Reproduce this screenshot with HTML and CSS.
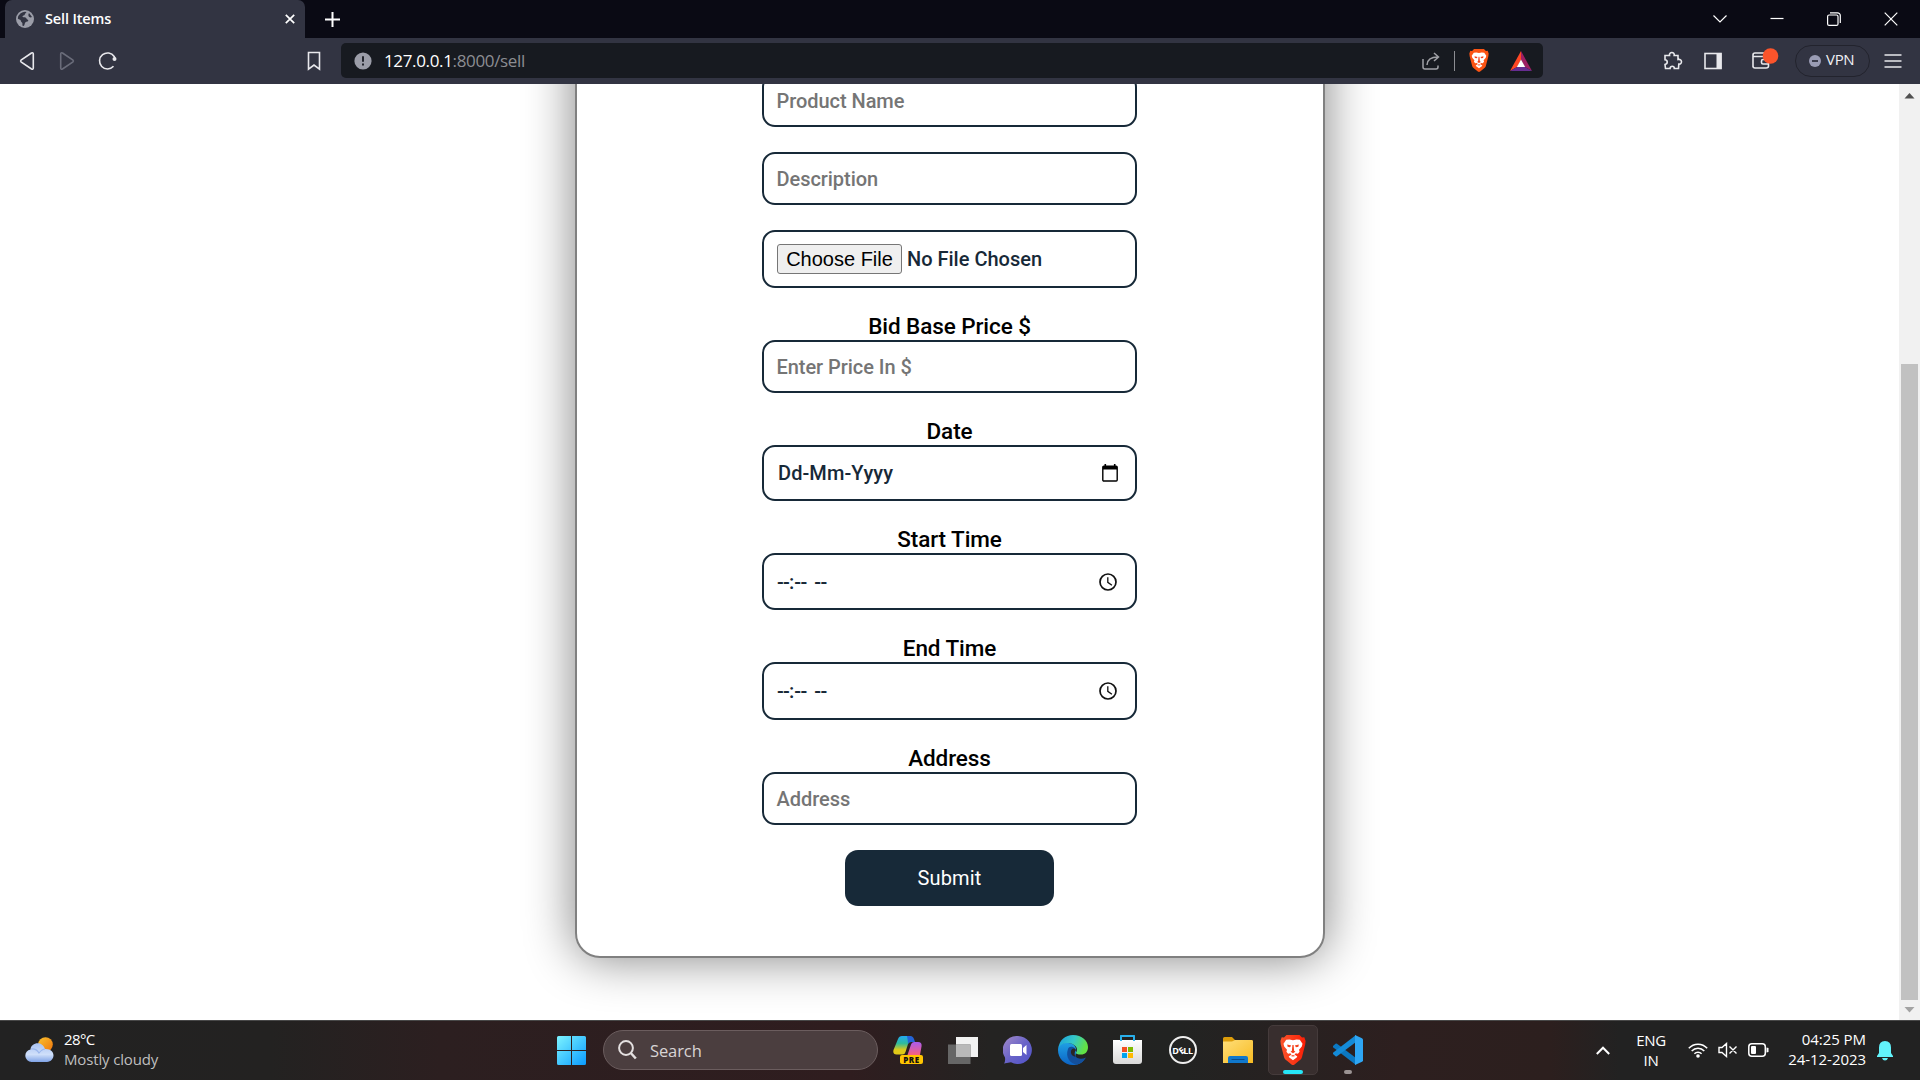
FILE: index.html
```html
<!DOCTYPE html>
<html lang="en">
<head>
<meta charset="utf-8">
<title>Sell Items</title>
<link rel="stylesheet" href="styles.css">
</head>
<body>
<svg width="0" height="0" class="defs" aria-hidden="true">
  <defs>
    <linearGradient id="gWin" x1="0" y1="0" x2="1" y2="1"><stop offset="0" stop-color="#7df4ff"/><stop offset="1" stop-color="#0a9bff"/></linearGradient>
    <linearGradient id="gSun" x1="0" y1="0" x2="1" y2="1"><stop offset="0" stop-color="#f9c22e"/><stop offset="1" stop-color="#f0740c"/></linearGradient>
    <linearGradient id="gCloud" x1="0" y1="0" x2="0" y2="1"><stop offset="0" stop-color="#a9c3f3"/><stop offset=".6" stop-color="#cfdffa"/><stop offset="1" stop-color="#7fa3e6"/></linearGradient>
    <linearGradient id="gCopA" x1="0" y1="0" x2="0" y2="1"><stop offset="0" stop-color="#22a8f2"/><stop offset=".4" stop-color="#2fbb9c"/><stop offset=".75" stop-color="#e0c918"/></linearGradient>
    <linearGradient id="gCopB" x1="0" y1="0" x2="0" y2="1"><stop offset="0" stop-color="#a95bf0"/><stop offset="1" stop-color="#f7617c"/></linearGradient>
    <linearGradient id="gChat" x1="0" y1="0" x2="1" y2="1"><stop offset="0" stop-color="#a48bc8"/><stop offset=".5" stop-color="#6a64c8"/><stop offset="1" stop-color="#4f52c9"/></linearGradient>
    <linearGradient id="gEdge" x1="0" y1="0" x2="1" y2=".3"><stop offset="0" stop-color="#1a9ee0"/><stop offset=".55" stop-color="#35c8c8"/><stop offset="1" stop-color="#62e245"/></linearGradient>
    <linearGradient id="gEdge2" x1="0" y1="0" x2="0" y2="1"><stop offset="0" stop-color="#1f9fe4"/><stop offset="1" stop-color="#0c63c4"/></linearGradient>
    <linearGradient id="gBag" x1="0" y1="0" x2="0" y2="1"><stop offset="0" stop-color="#fff"/><stop offset="1" stop-color="#d9d9d9"/></linearGradient>
    <linearGradient id="gFold" x1="0" y1="0" x2="1" y2="1"><stop offset="0" stop-color="#ffde79"/><stop offset="1" stop-color="#f7bb22"/></linearGradient>
    <linearGradient id="gBrave" x1="0" y1="0" x2="1" y2="0"><stop offset="0" stop-color="#fb542b"/><stop offset="1" stop-color="#fa1e06"/></linearGradient>
    <symbol id="lion" viewBox="0 0 26 30">
      <path d="M6.500 0h13l2.500 2.500 2.300-.2L25.600 6l-.4 3.500L22 22c-.5 1.800-1.500 2.700-3 3.800L14.500 29.400c-1 .8-2 .8-3 0L7 25.800c-1.500-1.100-2.500-2-3-3.800L.8 9.500.4 6l1.300-3.700 2.300.2z"/>
      <path fill="#fff" d="M13 5.300l3.500-.8 3.300.3 2.700 4-.7 2.600-2.800 3.300.6 2-1.700 2-2.100-.5-1.300 1.300 2.800 1.900-.6 1L13 25.200l-3.700-2.800-.6-1 2.800-1.900-1.300-1.300-2.100.5-1.700-2 .6-2-2.800-3.300-.7-2.600 2.700-4 3.300-.3z"/>
      <path fill="#f5401a" d="M7.200 9.600l4 .8-1.200 1.800-2.400-.5zM18.800 9.600l-4 .8 1.200 1.800 2.400-.5zM12.400 10h1.200l.5 5.700 1.300 1.100L13 18.200l-2.400-1.400 1.300-1.100zM10.600 21l2.400-1 2.400 1-2.400.6z"/>
    </symbol>
    <symbol id="clock" viewBox="0 0 18 18"><circle cx="9" cy="9" r="8" fill="none" stroke="#111" stroke-width="1.700"/><path d="M8.800 4.300v5l4.100 3" fill="none" stroke="#111" stroke-width="1.300"/></symbol>
  </defs>
</svg>

<header class="tabs">
  <div class="tab">
    <svg class="globe" width="18" height="18" viewBox="0 0 18 18"><circle cx="9" cy="9" r="9" fill="#9b9da8"/><path d="M1.800 8.500A7.300 7.300 0 0 1 10.500 1.900L9.300 3.500C8.500 4.500 9 5 7.500 5.600 6 6 6.300 7.300 7.500 7.300c1.500 0 2.800.2 3 1.300.3 1.400 1.800.6 1.800 2.200 0 1-1.800.6-2.800 1.400-1 .9-.6 2.400-1.700 3.900l-1.500-.5c.4-1.800.2-2.600-.6-3.300-.9-.7-.6-2-1.600-2.500-.8-.4-1.600-.5-2.300-1.300zM13 3l3 4c-1 .6-2.200.5-3-.2-.8-.8-.8-2.500 0-3.800z" fill="#323442"/></svg>
    <span class="tab-title">Sell Items</span>
    <svg width="10" height="10" viewBox="0 0 10 10" stroke="#fff" stroke-width="1.700"><path d="M.8.800l8.400 8.400M9.200.8.800 9.200"/></svg>
  </div>
  <svg class="plus" width="15" height="15" viewBox="0 0 15 15" stroke="#fff" stroke-width="2"><path d="M7.500 0v15M0 7.500h15"/></svg>
  <div class="window-controls">
    <svg width="14" height="14" viewBox="0 0 14 14"><path d="M.5 3.500 7 10l6.500-6.500"/></svg>
    <svg width="14" height="14" viewBox="0 0 14 14"><path d="M.5 6.500h13"/></svg>
    <svg width="14" height="14" viewBox="0 0 14 14"><rect x=".6" y="3" width="10.400" height="10.400" rx="1.500"/><path d="M3 .8h7.500a2.800 2.800 0 0 1 2.800 2.800V11"/></svg>
    <svg width="14" height="14" viewBox="0 0 14 14"><path d="M.7.700l12.600 12.600M13.300.7.700 13.300"/></svg>
  </div>
</header>

<nav class="toolbar">
  <svg class="ico back" width="24" height="24" viewBox="0 0 24 24"><path d="M16.500 4 6 11.200q-.8.800 0 1.600L16.500 20q1.800.7 1.800-1V5q0-1.700-1.800-1z"/></svg>
  <svg class="ico fwd" width="24" height="24" viewBox="0 0 24 24"><path d="M7.500 4 18 11.200q.8.800 0 1.600L7.500 20q-1.800.7-1.800-1V5q0-1.700 1.800-1z"/></svg>
  <svg class="ico reload" width="24" height="24" viewBox="0 0 24 24"><path d="M17.500 17.300A8 8 0 1 1 18.200 7.500l1 2.300"/><circle cx="18.500" cy="10" r="2" fill="#e8e8ec" stroke="none"/></svg>
  <svg class="ico bookmark" width="24" height="24" viewBox="0 0 24 24"><path d="M6.500 3.500h11v16.700L12 16l-5.500 4.200z"/></svg>
  <div class="address-bar">
    <svg width="18" height="18" viewBox="0 0 18 18"><circle cx="9" cy="9" r="8.600" fill="#9b9da8"/><path d="M9 4.300v5.500M9 11.500v2" stroke="#22242c" stroke-width="2"/></svg>
    <span class="url"><b>127.0.0.1</b>:8000/sell</span>
    <svg class="share" width="20" height="20" viewBox="0 0 20 20" fill="none" stroke="#a0a1a6" stroke-width="1.500"><path d="M2 8v8q0 2 2 2h11q2 0 2-2v-1.500M6 14q.3-8 11-8M13 2l4.500 4L13 10"/></svg>
    <i class="bar"></i>
    <svg width="22" height="23" class="lion-small" fill="#fb5414"><use href="#lion"/></svg>
    <svg class="bat" width="24" height="22" viewBox="0 0 24 22"><path d="M12 1 1 21l7-4 4-7z" fill="#ff4724"/><path d="M12 1l11 20-7-4-4-7z" fill="#9e1f63"/><path d="M1 21h22l-7-4H8z" fill="#662d91"/><path d="M12 9.500 16.200 17H7.800z" fill="#fff"/></svg>
  </div>
  <svg class="ico puzzle" width="24" height="24" viewBox="0 0 24 24"><path d="M4 6.500h4.500C7.800 2.500 14 2.500 13.200 6.500H17v4c4.500-.8 4.500 5 .8 4.600L17.500 19.500h-4.200c.5-3-4.500-3-4.200 0H4.500L4 15.500c3-.3 3-4.500 0-4.700z"/></svg>
  <svg class="ico panel" width="24" height="24" viewBox="0 0 24 24"><rect x="4" y="4.500" width="16" height="15"/><path d="M15.500 4h5v16h-5z" fill="#e8e8ec" stroke="none"/></svg>
  <svg class="ico wallet" width="28" height="26" viewBox="0 0 28 26"><path d="M1 20V8q0-2 2-2h12M1 9.500h15M1 19q0 2 2 2h11q2.500 0 2.500-2v-2M16.500 12.500H11q-1.500 0-1.500 1.500v1.500q0 1.500 1.500 1.500h5.500z"/><circle cx="18.500" cy="9" r="7.800" fill="#fb542b" stroke="none"/></svg>
  <div class="vpn"><svg width="12" height="12" viewBox="0 0 12 12"><circle cx="6" cy="6" r="6" fill="#9a9cb4"/><path d="M3 6h6" stroke="#323442" stroke-width="1.800"/></svg><span>VPN</span></div>
  <svg class="ico menu" width="24" height="24" viewBox="0 0 24 24"><path d="M3.500 6h17M3.500 12h17M3.500 18h17"/></svg>
</nav>

<div class="viewport">
  <main class="page">
    <form class="card">
      <div class="field placeholder">Product Name</div>
      <div class="field placeholder">Description</div>
      <div class="field file"><span class="file-button">Choose File</span><span>No File Chosen</span></div>
      <div class="group"><label>Bid Base Price $</label><div class="field placeholder">Enter Price In $</div></div>
      <div class="group"><label>Date</label><div class="field date"><span>Dd-Mm-Yyyy</span>
        <svg width="16" height="18" viewBox="0 0 16 18"><path d="M3.300 0v3M12.700 0v3" stroke="#000" stroke-width="1.600"/><rect x=".8" y="2.300" width="14.400" height="14.700" rx="1" fill="none" stroke="#000" stroke-width="1.400"/><path d="M1 2h14v3.500H1z"/></svg></div></div>
      <div class="group"><label>Start Time</label><div class="field time start"><span class="blank"><i>--</i>:<i>--</i><i class="ampm">--</i></span><svg width="18" height="18"><use href="#clock"/></svg></div></div>
      <div class="group"><label>End Time</label><div class="field time end"><span class="blank"><i>--</i>:<i>--</i><i class="ampm">--</i></span><svg width="18" height="18"><use href="#clock"/></svg></div></div>
      <div class="group"><label>Address</label><div class="field placeholder">Address</div></div>
      <div class="submit">Submit</div>
    </form>
  </main>
  <div class="scrollbar">
    <svg width="21" height="24" viewBox="0 0 21 24"><path d="M5.500 14.500h10L10.500 9z" fill="#505050"/></svg>
    <div class="thumb"></div>
    <svg width="21" height="20" viewBox="0 0 21 20"><path d="M5.500 7h10l-5 5.500z" fill="#a3a3a3"/></svg>
  </div>
</div>

<footer class="taskbar">
  <div class="weather">
    <svg width="29" height="26" viewBox="0 0 29 26"><circle cx="20.500" cy="7.500" r="7.300" fill="url(#gSun)"/><path d="M6.500 25a6.300 6.300 0 0 1-1-12.500C6 5 17.500 3.500 20 12c12-.5 10 13 2 13z" fill="url(#gCloud)"/><path d="M6 12c3-.5 6 .5 8 4 2-2.500 4-4 6-4" fill="none" stroke="#9ab6ec" stroke-width="1.200"/></svg>
    <div class="weather-text"><div class="temp">28°C</div><div class="cond">Mostly cloudy</div></div>
  </div>
  <div class="dock">
    <div class="slot"><svg width="29" height="29" viewBox="0 0 29 29" fill="url(#gWin)"><path d="M1.500 0H14v14H0V1.500Q0 0 1.500 0zM15 0h12.500Q29 0 29 1.500V14H15zM0 15h14v14H1.500Q0 29 0 27.500zM15 15h14v12.500q0 1.500-1.500 1.500H15z"/></svg></div>
    <div class="search"><svg width="19" height="20" viewBox="0 0 19 20" fill="none" stroke="#e4e0e0" stroke-width="2"><circle cx="8" cy="8" r="6.900"/><path d="M12.800 13l5 5.500" stroke-width="2.500"/></svg><span>Search</span></div>
    <div class="slot"><div class="copilot"><svg width="29" height="28" viewBox="0 0 29 28"><path d="M5 3q1-3 4-3h7q3 0 4 3l1 3h-3q-2.500 0-3 2l-2.500 8q-.7 2.500-3 2.500H3.500Q-.5 18.500.5 14z" fill="url(#gCopA)"/><path d="M14 0h3q3 0 4 3l1 3h-4q-2.500 0-3 2-.3-5-1-8z" fill="#2463d8"/><path d="M18 8.500Q18.600 6 21 6h4q4 0 3.600 4L27 19H14.500z" fill="url(#gCopB)"/></svg><span class="pre">PRE</span></div></div>
    <div class="slot"><svg width="30" height="29" viewBox="0 0 30 29"><path d="M8 1h22v20H8z" fill="#f2f2f2"/><path d="M0 8.500h22.500V28H0z" fill="#666" /><path d="M8 8.500h14.500V21H8z" fill="#b9b9b9"/></svg></div>
    <div class="slot"><svg width="30" height="30" viewBox="0 0 30 30"><path d="M15 1a14 14 0 1 1-7 26.200L1 28.500q1.500-2 1-6A14 14 0 0 1 15 1z" fill="url(#gChat)"/><rect x="7" y="9" width="12" height="12" rx="1.500" fill="#fff"/><path d="M20 13l3.500-3v10L20 17z" fill="#fff"/></svg></div>
    <div class="slot"><svg width="30" height="30" viewBox="0 0 30 30"><path d="M0 15C0 9 5 7.500 10 8c7 .5 9 5 8 10-2 7 1 8 8 7-3 4-7 5-11 5C6 30 0 23 0 15z" fill="url(#gEdge2)"/><path d="M10 14c-3 8 2 15 9 15.400 4-.9 7-3.400 9-7-7 3.500-14-.5-11-7.400 1-3-6-5-7-1z" fill="#134f9c"/><path d="M18 15c-1.500 2-2 4.500-.5 6.500-3 0-5-2.500-4.500-5.500.5-2.500 3.500-3.500 5-1z" fill="#2a2524"/><path d="M.3 13C1.500 5 7.500 0 15 0c9 0 15 6 15 12 0 5-3 7.500-7 7.500-3 0-5.500-.5-5-2 2-2 1-6-2-7.500C11 6.500 3 8 .3 13z" fill="url(#gEdge)"/></svg></div>
    <div class="slot"><svg width="29" height="30" viewBox="0 0 29 30"><path d="M8 6V1h13v5" fill="none" stroke="#29b0ec" stroke-width="1.800"/><path d="M0 5h29v21q0 3-3 3H3q-3 0-3-3z" fill="url(#gBag)"/><path d="M8 1v5M21 1v5" stroke="#29b0ec" stroke-width="1.800"/><path d="M9 12h5v5H9z" fill="#f25022"/><path d="M15 12h5v5h-5z" fill="#7fba00"/><path d="M9 18h5v5H9z" fill="#00a4ef"/><path d="M15 18h5v5h-5z" fill="#ffb900"/></svg></div>
    <div class="slot"><div class="dell">D<i>E</i>LL</div></div>
    <div class="slot"><svg width="30" height="28" viewBox="0 0 30 28"><path d="M0 2.500Q0 1 1.500 1H9l3 3h16.500Q30 4 30 5.500V10H0z" fill="#dc9c0a"/><path d="M0 5.500h9l3-1.500h16.500Q30 4 30 5.500V27H0z" fill="url(#gFold)"/><path d="M5 27v-5q0-2 2-2h16q2 0 2 2v5z" fill="#1078cc"/><path d="M8.500 23.500h13" stroke="#0a4c8a" stroke-width="1"/></svg></div>
    <div class="slot"><div class="app active"><svg width="26" height="30" fill="url(#gBrave)"><use href="#lion"/></svg><i class="run"></i></div></div>
    <div class="slot"><div class="app"><svg width="30" height="30" viewBox="0 0 30 30"><path d="M0 11 2.500 8.700q.8-.5 1.500 0L23 23v7L.3 12.500Q-.5 11.700 0 11z" fill="#0b78c2"/><path d="M0 19l2.500 2.300q.8.500 1.500 0L23 7V0L.3 17.500q-.8.700-.3 1.500z" fill="#148bd8"/><path d="M22 0l7 3.200q1 .5 1 1.500v20.600q0 1-1 1.500L22 30z" fill="#2ea6f4"/></svg><i class="run small"></i></div></div>
  </div>
  <div class="tray">
    <svg class="chev" width="14" height="9" viewBox="0 0 14 9" fill="none" stroke="#fff" stroke-width="2"><path d="M.8 8 7 1.700 13.200 8"/></svg>
    <div class="lang">ENG<br>IN</div>
    <svg class="wifi" width="20" height="16" viewBox="0 0 20 16" fill="none" stroke="#fff" stroke-width="1.500"><path d="M.8 6.300a12.500 12.500 0 0 1 18.400 0M3.700 9.100a8.600 8.600 0 0 1 12.600 0M6.400 11.700a5 5 0 0 1 7.200 0"/><circle cx="10" cy="14" r="1.800" fill="#fff" stroke="none"/></svg>
    <svg class="mute" width="20" height="16" viewBox="0 0 20 16" fill="none" stroke="#fff" stroke-width="1.400"><path d="M1 5.500h3L8.500 1.500v13L4 10.500H1zM11.500 4.500l7 7M18.500 4.500l-7 7"/></svg>
    <svg class="battery" width="21" height="14" viewBox="0 0 21 14"><rect x=".8" y=".8" width="16.500" height="12.400" rx="3" fill="none" stroke="#fff" stroke-width="1.500"/><rect x="3" y="3" width="5" height="8" rx="1" fill="#fff"/><path d="M18.500 4.500l2 .5v4l-2 .5z" fill="#fff"/></svg>
    <div class="clock">04:25 PM<br>24-12-2023</div>
    <svg class="bell" width="16" height="20" viewBox="0 0 16 20" fill="#62f3fb"><path d="M8 0q6 .3 6 6.500V12l2 3v1H0v-1l2-3V6.500Q2 .3 8 0zM5 17h6q-.8 2.500-3 2.500T5 17z"/></svg>
  </div>
</footer>
</body>
</html>
```
FILE: styles.css
```css
* { box-sizing: border-box; }
html, body { margin: 0; height: 1080px; overflow: hidden; }
body { display: flex; flex-direction: column; width: 1920px; background: #fff; font-family: "Open Sans", "Noto Sans", sans-serif; }
svg { display: block; flex: none; }
i { font-style: normal; }
.defs { position: absolute; }

/* Tab strip */
.tabs { display: flex; align-items: center; flex: none; height: 38px; padding-left: 5px; background: #0a0a14; }
.tab { display: flex; align-items: center; width: 300px; height: 38px; padding: 0 10px 0 11px; border-radius: 7px 7px 0 0; background: #323442; }
.tab-title { flex: 1; margin-left: 11px; padding-bottom: 2px; color: #fff; font-size: 14.500px; font-weight: 600; letter-spacing: -.15px; }
.plus { margin-left: 20px; }
.window-controls { display: flex; gap: 43px; margin-left: auto; margin-right: 22px; fill: none; stroke: #fff; stroke-width: 1.200; }

/* Toolbar */
.toolbar { display: flex; align-items: center; flex: none; height: 46px; padding-left: 15px; background: #323442; }
.ico { margin-top: -1px; fill: none; stroke: #e8e8ec; stroke-width: 1.600; }
.fwd { margin-left: 16px; stroke: #6a6c7a; }
.reload { margin-left: 17px; }
.bookmark { margin-left: 182px; }
.address-bar { display: flex; align-items: center; width: 1202px; height: 35px; margin: -1px 0 0 15px; padding: 0 10px 0 13px; border-radius: 5px; background: #171a20; }
.url { margin-left: 12px; padding-bottom: 1px; color: #8c8d92; font-size: 17px; letter-spacing: -.35px; }
.url b { color: #fff; font-weight: 400; }
.share { margin-left: auto; }
.bar { width: 1px; height: 20px; margin: 0 13px; background: #8c8d92; }
.bat { margin-left: 19px; }
.puzzle { margin-left: 118px; }
.panel { margin-left: 16px; }
.wallet { margin-left: 27px; margin-top: -3px; }
.vpn { display: flex; align-items: center; gap: 5px; width: 75px; height: 32px; margin: -1px 0 0 15px; padding-left: 13px; border: 1px solid #22232d; border-radius: 16px; color: #f0f0f4; font-size: 15px; letter-spacing: -.3px; }
.vpn span { padding-bottom: 3px; }
.menu { margin-left: 11px; }

/* Page */
.viewport { display: flex; flex: none; height: 936px; overflow: hidden; }
.page { display: flex; flex: 1; flex-direction: column; align-items: center; justify-content: flex-end; height: 936px; padding-bottom: 62px; overflow: hidden; font-family: Roboto, sans-serif; }
.card { display: flex; flex: none; flex-direction: column; align-items: center; gap: 25px; width: 750px; margin: 0; padding: 150px 0 50px; border: 2px solid #808080; border-radius: 25px; background: #fff; box-shadow: 0 0 50px #808080; }
.field { display: flex; align-items: center; width: 375px; height: 53px; padding: 0 12px 0 12.500px; border: 2px solid #172938; border-radius: 13px; color: #172938; font-size: 20px; font-weight: 500; }
.placeholder { color: #757575; letter-spacing: -.05px; }
.file { gap: 5px; height: 58px; padding-left: 13px; padding-bottom: 1px; }
.file-button { display: flex; align-items: center; justify-content: center; width: 125px; height: 30px; margin-top: 1px; border: 1px solid #767676; border-radius: 3px; background: #efefef; color: #000; font: 400 20px "Liberation Sans", sans-serif; }
.group { display: flex; flex-direction: column; align-items: center; }
label { height: 27px; color: #000; font-size: 22.500px; font-weight: 500; line-height: 27px; letter-spacing: -.08px; }
.date { justify-content: space-between; height: 56px; padding: 0 17px 0 14px; letter-spacing: .08px; }
.time { justify-content: space-between; height: 57px; padding: 0 18px 0 13px; }
.end { height: 58px; }
.blank { display: flex; white-space: nowrap; }
.blank i { width: 12px; letter-spacing: -.7px; }
.blank .ampm { margin-left: 8px; }
.submit { display: flex; align-items: center; justify-content: center; width: 209px; height: 56px; border-radius: 13px; background: #172938; color: #fff; font-size: 20px; font-weight: 400; letter-spacing: .15px; }
.scrollbar { display: flex; flex-direction: column; align-items: center; width: 21px; background: #f1f1f1; }
.thumb { width: 17px; height: 636px; margin-top: auto; background: #c1c1c1; }

/* Taskbar */
.taskbar { display: flex; flex: none; height: 60px; border-top: 1px solid #484848; background: linear-gradient(90deg, #222 0, #232221 270px, #2c1f20 440px, #2f1d1f 850px, #242322 990px, #222322 1180px, #2d1f1f 1400px, #2c1f1e 1550px, #222 1620px, #222 100%); color: #fff; }
.weather { display: flex; align-items: center; gap: 10px; width: 544px; padding: 0 0 1px 25px; }
.weather-text { padding-bottom: 3px; }
.temp, .cond { font-size: 15px; line-height: 20px; letter-spacing: -.15px; }
.temp { letter-spacing: -.6px; }
.cond { color: #bfbfbf; }
.dock { display: flex; align-items: center; height: 58px; }
.slot { display: flex; align-items: center; justify-content: center; width: 55px; height: 58px; }
.search { display: flex; align-items: center; gap: 13px; width: 275px; height: 40px; margin: 0 2px 0 4px; padding-left: 14px; border: 1px solid #6b5d5e; border-radius: 20px; background: #4b3e3f; color: #d8d4d4; font-size: 16.500px; letter-spacing: -.1px; }
.copilot { position: relative; width: 29px; height: 28px; }
.pre { position: absolute; right: -1px; bottom: 0; width: 23px; height: 9px; border-radius: 2px; background: #ffc400; color: #111; font-size: 8px; font-weight: 800; line-height: 9px; letter-spacing: .5px; text-align: center; }
.dell { display: flex; align-items: center; justify-content: center; width: 28px; height: 28px; border: 2px solid #eee; border-radius: 50%; font-size: 9px; font-weight: 700; letter-spacing: -.3px; }
.dell i { transform: rotate(-35deg); }
.app { position: relative; display: flex; align-items: center; justify-content: center; width: 50px; height: 50px; border-radius: 5px; }
.active { border: 1px solid #453b3b; background: #382e2e; }
.run { position: absolute; bottom: 0; left: 14px; width: 20px; height: 4px; border-radius: 2px; background: #26e5f7; }
.small { left: 21px; width: 8px; background: #9b9393; bottom: 1px; }
.tray { display: flex; align-items: center; height: 58px; margin-left: 221px; }
.lang { width: 40px; margin-left: 21px; font-size: 15px; line-height: 20px; letter-spacing: -.35px; text-align: center; }
.wifi { margin-left: 17px; }
.mute { margin-left: 10px; }
.battery { margin-left: 10px; }
.clock { width: 97px; padding-bottom: 3px; font-size: 15px; line-height: 20px; letter-spacing: -.05px; text-align: right; }
.bell { margin-left: 11px; margin-top: 2px; }
```
